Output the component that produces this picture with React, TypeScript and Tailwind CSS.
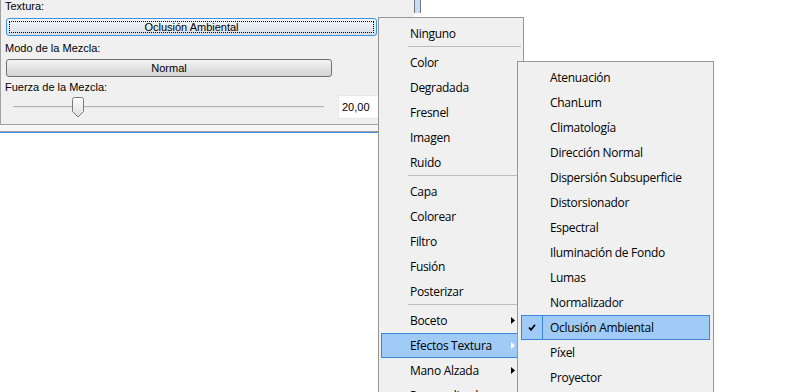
import React from 'react';

const mainItems: (string | null)[] = [
  'Ninguno',
  null,
  'Color',
  'Degradada',
  'Fresnel',
  'Imagen',
  'Ruido',
  null,
  'Capa',
  'Colorear',
  'Filtro',
  'Fusión',
  'Posterizar',
  null,
];

const subMenus = ['Boceto', 'Efectos Textura', 'Mano Alzada', 'Personalizado'];

const textureEffects = [
  'Atenuación',
  'ChanLum',
  'Climatología',
  'Dirección Normal',
  'Dispersión Subsuperficie',
  'Distorsionador',
  'Espectral',
  'Iluminación de Fondo',
  'Lumas',
  'Normalizador',
  'Oclusión Ambiental',
  'Píxel',
  'Proyector',
];

function Arrow({ white }: { white?: boolean }) {
  return (
    <svg width="4" height="7" viewBox="0 0 4 7">
      <polygon points="0,0 4,3.5 0,7" fill={white ? '#ffffff' : '#000000'} />
    </svg>
  );
}

function SliderThumb() {
  return (
    <svg width="12" height="21" viewBox="0 0 12 21" className="absolute left-[59px] top-[2px]">
      <defs>
        <linearGradient id="thumb" x1="0" y1="0" x2="0" y2="1">
          <stop offset="0" stopColor="#fdfdfd" />
          <stop offset="1" stopColor="#dedede" />
        </linearGradient>
      </defs>
      <path
        d="M0.5 2.5 Q0.5 0.5 2.5 0.5 H9.5 Q11.5 0.5 11.5 2.5 V14.5 L6 20 L0.5 14.5 Z"
        fill="url(#thumb)"
        stroke="#7a7a7a"
      />
    </svg>
  );
}

function SettingsPanel() {
  return (
    <div className="flex flex-col w-[414px] h-[125px] bg-[#f0f0f0] border-l border-b border-[#a0a0a0] text-[11px] text-black font-['Liberation_Sans',Arial,sans-serif]">
      <div className="h-[13px] leading-[13px] pl-[4px]">Textura:</div>
      <button className="relative mt-[5px] ml-[5px] w-[371px] h-[18px] rounded-[3px] border border-[#3c94e6] bg-linear-to-b from-[#f5f7f9] to-[#d6dde3] text-[11px] leading-[16px]">
        <span className="absolute inset-[2px] border border-dotted border-black" />
        Oclusión Ambiental
      </button>
      <div className="mt-[6px] h-[13px] leading-[13px] pl-[4px]">Modo de la Mezcla:</div>
      <button className="mt-[4px] ml-[5px] w-[326px] h-[18px] rounded-[3px] border border-[#707070] bg-linear-to-b from-[#f3f3f3] to-[#d4d4d4] text-[11px] leading-[16px]">
        Normal
      </button>
      <div className="mt-[4px] h-[13px] leading-[13px] pl-[4px]">Fuerza de la Mezcla:</div>
      <div className="mt-[1px] flex items-center h-[24px]">
        <div className="relative ml-[12px] w-[311px] h-[24px]">
          <div className="absolute left-0 right-0 top-[11px] h-[1px] bg-[#b4b4b4]" />
          <div className="absolute left-0 right-0 top-[12px] h-[1px] bg-[#e6e6e6]" />
          <SliderThumb />
        </div>
        <div className="ml-[14px] w-[76px] h-[24px] bg-white border border-[#e8e8e8] pl-[3px] leading-[22px] text-[11px]">
          20,00
        </div>
      </div>
    </div>
  );
}

function MenuRow({
  label,
  highlighted,
  arrow,
  checked,
}: {
  label: string;
  highlighted?: boolean;
  arrow?: boolean;
  checked?: boolean;
}) {
  return (
    <div
      className={
        highlighted
          ? 'relative flex items-center justify-between h-[25px] pl-[28px] pr-[5px] border border-[#3b87d4] bg-[#9fcbf6]'
          : 'relative flex items-center justify-between h-[25px] pl-[28px] pr-[5px] border border-transparent'
      }
    >
      {checked && (
        <span className="absolute left-[-1px] top-[-1px] w-[22px] h-[25px] border border-[#3b87d4] flex items-center justify-center">
          <svg width="8" height="7" viewBox="0 0 8 7">
            <path d="M1 3.5 L3 5.8 L7 0.8" fill="none" stroke="#000" strokeWidth="1.8" />
          </svg>
        </span>
      )}
      <span>{label}</span>
      {arrow && <Arrow white={highlighted} />}
    </div>
  );
}

function Separator() {
  return (
    <div className="h-[4px] pl-[27px]">
      <div className="h-[1px] bg-[#bcbcbc]" />
    </div>
  );
}

export default function App() {
  return (
    <div className="relative w-[801px] h-[392px] overflow-hidden bg-white">
      <div className="flex items-start">
        <SettingsPanel />
        <div className="w-[7px] h-[13px] border-x border-[#6f7a86] bg-[#c5dcf4]" />
      </div>
      <div className="w-[414px] h-[6px] bg-[#f7f7f7]" />
      <div className="w-[414px] h-[1px] bg-[#a0a0a0]" />
      <div className="w-[414px] h-[1px] bg-[#3f8fe0]" />

      <div className="absolute left-[378px] top-[17px] w-[146px] bg-[#f0f0f0] border border-[#979797] px-[2px] py-[3px] text-[12px] tracking-[-0.3px] text-black font-['Open_Sans','Noto_Sans',sans-serif]">
        {mainItems.map((item, i) =>
          item === null ? <Separator key={i} /> : <MenuRow key={i} label={item} />
        )}
        {subMenus.map((item) => (
          <MenuRow key={item} label={item} arrow highlighted={item === 'Efectos Textura'} />
        ))}
      </div>

      <div className="absolute left-[517px] top-[61px] w-[197px] bg-[#f0f0f0] border border-[#979797] px-[3px] py-[3px] text-[12px] tracking-[-0.3px] text-black font-['Open_Sans','Noto_Sans',sans-serif]">
        {textureEffects.map((item) => (
          <MenuRow
            key={item}
            label={item}
            highlighted={item === 'Oclusión Ambiental'}
            checked={item === 'Oclusión Ambiental'}
          />
        ))}
      </div>
    </div>
  );
}
